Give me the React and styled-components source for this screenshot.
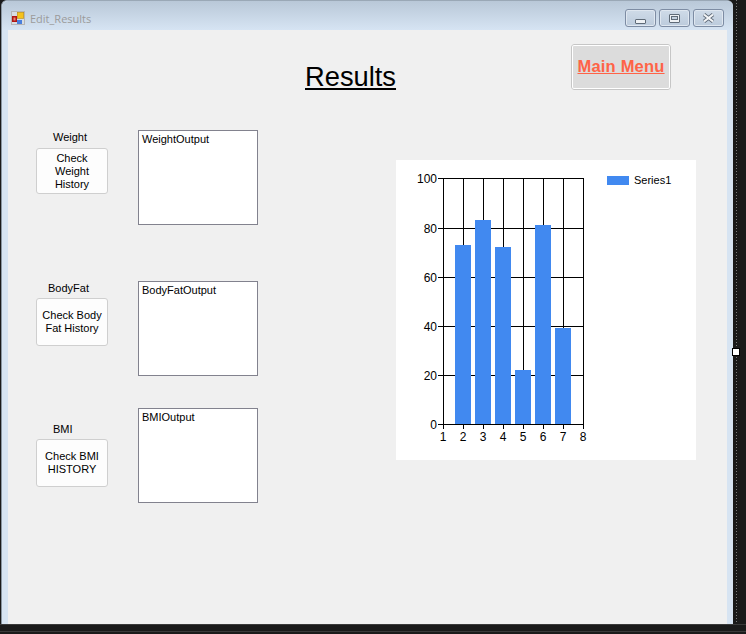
import React from "react";
import styled, { createGlobalStyle } from "styled-components";

const GlobalStyle = createGlobalStyle`
  html, body {
    margin: 0;
    padding: 0;
    background: #1a1a1a;
  }
  body {
    width: 746px;
    height: 634px;
    overflow: hidden;
    font-family: "Liberation Sans", Arial, sans-serif;
  }
`;

const bars = [
  { x: 455, top: 245 },
  { x: 475, top: 220 },
  { x: 495, top: 247 },
  { x: 515, top: 370 },
  { x: 535, top: 225 },
  { x: 555, top: 328 },
];

const yLabels = [
  { text: "100", y: 178 },
  { text: "80", y: 228 },
  { text: "60", y: 277 },
  { text: "40", y: 326 },
  { text: "20", y: 375 },
  { text: "0", y: 424 },
];

const xLabels = [443, 463, 483, 503, 523, 543, 563, 583];

const fields = [
  { label: "Weight", labelGap: 17, labelHeight: 17, button: "Check Weight History", buttonHeight: 46, output: "WeightOutput", top: 0, labelTop: 1 },
  { label: "BodyFat", labelGap: 12, labelHeight: 16, button: "Check Body Fat History", buttonHeight: 48, output: "BodyFatOutput", top: 56, labelTop: 1 },
  { label: "BMI", labelGap: 17, labelHeight: 16, button: "Check BMI HISTORY", buttonHeight: 48, output: "BMIOutput", top: 32, labelTop: 15 },
];

const AppIcon = () => (
  <IconSvg width="14" height="14" viewBox="0 0 14 14">
    <rect x="0.5" y="0.5" width="13" height="13" fill="#d8dde2" stroke="#b5b5b5" />
    <rect x="1" y="5" width="5" height="6" fill="#b01515" />
    <rect x="2.5" y="6.5" width="2" height="3" fill="#e88a70" />
    <rect x="6.3" y="1.3" width="6.4" height="6" fill="#f5c21c" stroke="#b98a10" strokeWidth="0.6" />
    <rect x="6" y="9" width="5" height="4" fill="#4a7fdc" />
  </IconSvg>
);

const CloseGlyph = () => (
  <svg width="13" height="10" viewBox="0 0 13 10">
    <path d="M2 1.5 L11 8.5 M11 1.5 L2 8.5" stroke="#5f6b78" strokeWidth="3.8" />
    <path d="M2 1.5 L11 8.5 M11 1.5 L2 8.5" stroke="#f4f6f8" strokeWidth="2.2" />
  </svg>
);

const Chart = () => (
  <svg width="300" height="300" viewBox="396 160 300 300">
    {[463, 483, 503, 523, 543, 563].map((x) => (
      <rect key={x} x={x} y="178" width="1" height="246" fill="#000" />
    ))}
    {yLabels.map((l) => (
      <rect key={l.text} x="438" y={l.y} width="146" height="1" fill="#000" />
    ))}
    <rect x="443" y="178" width="1" height="251" fill="#000" />
    <rect x="583" y="178" width="1" height="251" fill="#000" />
    {xLabels.map((x) => (
      <rect key={x} x={x} y="424" width="1" height="5" fill="#000" />
    ))}
    {bars.map((b) => (
      <rect key={b.x} x={b.x} y={b.top} width="16" height={424 - b.top} fill="#4189f0" />
    ))}
    {yLabels.map((l) => (
      <text key={l.text} x="437" y={l.y + 5} textAnchor="end" fontSize="12" fill="#000" fontFamily="Liberation Sans, Arial, sans-serif">
        {l.text}
      </text>
    ))}
    {xLabels.map((x, i) => (
      <text key={x} x={x} y="441" textAnchor="middle" fontSize="12" fill="#000" fontFamily="Liberation Sans, Arial, sans-serif">
        {i + 1}
      </text>
    ))}
    <rect x="607" y="176" width="22" height="9" fill="#4189f0" />
    <text x="634" y="184" fontSize="11" fill="#000" fontFamily="Liberation Sans, Arial, sans-serif">
      Series1
    </text>
  </svg>
);

export default function App() {
  return (
    <>
      <GlobalStyle />
      <Screen>
        <TopArea>
          <Window>
            <TitleBar>
              <AppIcon />
              <WindowTitle>Edit_Results</WindowTitle>
              <Controls>
                <ControlButton>
                  <MinGlyph />
                </ControlButton>
                <ControlButton>
                  <MaxGlyph />
                </ControlButton>
                <ControlButton>
                  <CloseGlyph />
                </ControlButton>
              </Controls>
            </TitleBar>
            <Client>
              <Header>
                <Title>Results</Title>
                <MainMenu>Main Menu</MainMenu>
              </Header>
              <Body>
                <Fields>
                  {fields.map((f) => (
                    <FieldRow key={f.label} $top={f.top}>
                      <ActionColumn $top={f.labelTop}>
                        <FieldLabel $gap={f.labelGap} $height={f.labelHeight}>{f.label}</FieldLabel>
                        <ActionButton $height={f.buttonHeight}>{f.button}</ActionButton>
                      </ActionColumn>
                      <OutputBox>{f.output}</OutputBox>
                    </FieldRow>
                  ))}
                </Fields>
                <ChartPanel>
                  <Chart />
                </ChartPanel>
              </Body>
            </Client>
          </Window>
          <SideStrip>
            <ResizeHandle />
          </SideStrip>
        </TopArea>
        <BottomStrip />
      </Screen>
    </>
  );
}

const Screen = styled.div`
  width: 746px;
  height: 634px;
  background: #1a1a1a;
`;

const TopArea = styled.div`
  display: flex;
  height: 624px;
`;

const Window = styled.div`
  width: 732px;
  height: 624px;
  margin-left: 1px;
  display: flex;
  flex-direction: column;
  background: #d7e4f2;
  border-top: 1px solid #9aa8b6;
  border-left: 1px solid #8a96a2;
  border-radius: 6px 6px 0 0;
  box-sizing: border-box;
`;

const TitleBar = styled.div`
  height: 29px;
  flex: none;
  display: flex;
  align-items: flex-start;
  padding-left: 9px;
  background: linear-gradient(#b9c8d8, #d6e4f3);
  border-radius: 6px 6px 0 0;
`;

const IconSvg = styled.svg`
  margin-top: 10px;
  flex: none;
`;

const WindowTitle = styled.span`
  margin: 10px 0 0 5px;
  font-family: "Open Sans", sans-serif;
  font-size: 11px;
  line-height: 15px;
  color: #9b9b9b;
`;

const Controls = styled.div`
  margin: 8px 9px 0 auto;
  display: flex;
  gap: 3px;
`;

const ControlButton = styled.div`
  width: 29px;
  height: 16px;
  display: flex;
  align-items: center;
  justify-content: center;
  border: 1px solid #7d8ca3;
  border-radius: 3px;
  background: linear-gradient(#cfdbe8, #bccbdc);
  box-shadow: inset 0 0 0 1px #dfe7f0;
`;

const MinGlyph = styled.div`
  width: 9px;
  height: 3px;
  margin-top: 6px;
  background: #eef1f4;
  border: 1px solid #5f6b78;
  border-radius: 1px;
`;

const MaxGlyph = styled.div`
  width: 9px;
  height: 7px;
  display: flex;
  align-items: center;
  justify-content: center;
  background: #eef1f4;
  border: 1px solid #5f6b78;
  border-radius: 1px;

  &::after {
    content: "";
    width: 5px;
    height: 2px;
    background: #c5d2e0;
    border: 1px solid #5f6b78;
  }
`;

const Client = styled.div`
  flex: 1;
  margin: 0 6px;
  background: #f0f0f0;
  display: flex;
  flex-direction: column;
`;

const Header = styled.div`
  height: 100px;
  box-sizing: border-box;
  padding-top: 14px;
  display: flex;
  align-items: flex-start;
`;

const Title = styled.h1`
  margin: 18px 0 0 297px;
  font-size: 27.3px;
  line-height: 30px;
  font-weight: 400;
  color: #000;
  text-decoration: underline;
`;

const MainMenu = styled.button`
  width: 100px;
  height: 46px;
  margin-left: 175px;
  padding: 0 0 2px;
  box-sizing: border-box;
  background: #dcdcdc;
  border: 2px solid #fff;
  outline: 1px solid #c6c6c6;
  outline-offset: -1px;
  border-radius: 3px;
  font-family: "Liberation Sans", Arial, sans-serif;
  font-size: 16.5px;
  letter-spacing: 0.2px;
  font-weight: 700;
  color: #ff6347;
  text-decoration: underline;
`;

const Body = styled.div`
  display: flex;
  align-items: flex-start;
`;

const Fields = styled.div`
  width: 388px;
  display: flex;
  flex-direction: column;
`;

const FieldRow = styled.div`
  display: flex;
  align-items: flex-start;
  gap: 30px;
  padding-left: 28px;
  margin-top: ${(p) => p.$top}px;
`;

const ActionColumn = styled.div`
  width: 72px;
  padding-top: ${(p) => p.$top}px;
  display: flex;
  flex-direction: column;
`;

const FieldLabel = styled.span`
  height: ${(p) => p.$height}px;
  padding-left: ${(p) => p.$gap}px;
  font-size: 11px;
  line-height: 13px;
  color: #000;
`;

const ActionButton = styled.button`
  width: 72px;
  height: ${(p) => p.$height}px;
  padding: 0 4px;
  box-sizing: border-box;
  background: #fdfdfd;
  border: 1px solid #cfcfcf;
  border-radius: 3px;
  font-family: "Liberation Sans", Arial, sans-serif;
  font-size: 11px;
  line-height: 13px;
  color: #000;
`;

const OutputBox = styled.div`
  width: 120px;
  height: 95px;
  padding: 1px 3px;
  box-sizing: border-box;
  background: #fff;
  border: 1px solid #82828e;
  font-size: 11px;
  line-height: 14px;
  color: #000;
`;

const ChartPanel = styled.div`
  width: 300px;
  height: 300px;
  margin-top: 30px;
  background: #fff;
  line-height: 0;
`;

const SideStrip = styled.div`
  position: relative;
  width: 13px;
  height: 624px;

  &::before {
    content: "";
    display: block;
    width: 1px;
    height: 100%;
    margin-left: 3px;
    background: repeating-linear-gradient(#7a7a7a 0 1px, #1a1a1a 1px 3px);
  }
`;

const ResizeHandle = styled.div`
  position: absolute;
  left: 0;
  top: 349px;
  width: 6px;
  height: 6px;
  background: #fff;
  box-shadow: 0 0 0 1px #000;
`;

const BottomStrip = styled.div`
  height: 10px;
  box-sizing: border-box;
  border-top: 1px solid #3a3a3a;

  &::after {
    content: "";
    display: block;
    height: 1px;
    margin-top: 6px;
    background: #3a3a3a;
  }
`;
